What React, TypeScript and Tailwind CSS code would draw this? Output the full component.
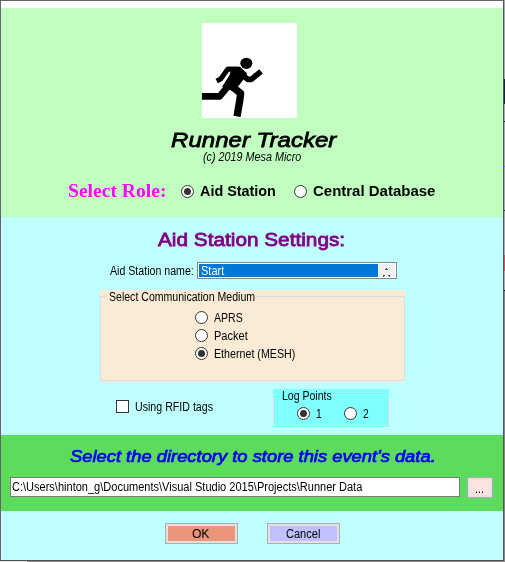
import { useLayoutEffect, useRef, useState } from "react";

type FitProps = { text: string; width: number; className?: string };

// A single line of text stretched or condensed to an exact width.
function Fit({ text, width, className = "" }: FitProps) {
  const ref = useRef<HTMLSpanElement>(null);
  const [scale, setScale] = useState(1);
  useLayoutEffect(() => {
    if (ref.current) setScale(width / ref.current.offsetWidth);
  }, [width]);
  return (
    <span className="block shrink-0" style={{ width }}>
      <span
        ref={ref}
        className={`block w-max origin-left whitespace-pre ${className}`}
        style={{ transform: `scaleX(${scale})` }}
      >
        {text}
      </span>
    </span>
  );
}

function Radio({ checked = false }: { checked?: boolean }) {
  return (
    <span className="flex h-[13px] w-[13px] shrink-0 items-center justify-center rounded-full border border-[#333] bg-white">
      {checked && <span className="h-[7px] w-[7px] rounded-full bg-[#333]" />}
    </span>
  );
}

function Option({ text, width, checked }: { text: string; width: number; checked?: boolean }) {
  return (
    <label className="flex h-[18px] items-center gap-[6px]">
      <Radio checked={checked} />
      <Fit text={text} width={width} className="pt-px text-[12px] leading-[14px]" />
    </label>
  );
}

function Runner() {
  return (
    <svg width="95" height="95" viewBox="0 0 285 285" className="block bg-white">
      <defs>
        <filter id="soft" x="-10%" y="-10%" width="120%" height="120%">
          <feGaussianBlur stdDeviation="2.2" />
        </filter>
      </defs>
      <g transform="translate(-21 66)" fill="none" stroke="#000" strokeLinejoin="round" filter="url(#soft)">
        <ellipse cx="154" cy="55" rx="18" ry="17" fill="#000" stroke="none" />
        <path d="M65 108 L77 102 L98 73 L130 73" strokeWidth="15" />
        <path d="M128 78 L158 103 L169 103 L198 79" strokeWidth="17" />
        <path d="M97 67 L134 67 L154 86 L148 97 L130 120 L114 136 L84 125 L105 92 L110 76 Z" fill="#000" strokeWidth="4" />
        <path d="M10 154 L74 154 L103 119" strokeWidth="20" />
        <path d="M107 121 L137 145 L134 168 L126 214" strokeWidth="22" />
      </g>
    </svg>
  );
}

function PushButton({ text, width, color }: { text: string; width: number; color: string }) {
  return (
    <button className="h-[21px] w-[73px] border border-[#adadad] bg-[#e1e1e1] p-[2px]">
      <span className={`flex h-full w-full items-center justify-center pr-[2px] ${color}`}>
        <Fit text={text} width={width} className="pt-px text-[12px] leading-[14px]" />
      </span>
    </button>
  );
}

export default function App() {
  return (
    <div className="flex h-[562px] w-[505px] flex-col overflow-hidden bg-[#8f8b8d] font-['Liberation_Sans',Arial,sans-serif] text-black">
      <div className="flex h-[561px]">
        <main className="flex h-[561px] w-[504px] flex-col border border-[#66636a] border-r-[#555] border-b-[#505050] bg-white pt-[7px]">
          <section className="flex h-[209px] shrink-0 flex-col items-center bg-[#c0ffc0] pt-[15px]">
            <div className="mr-[5px]">
              <Runner />
            </div>
            <div className="mt-[12px] ml-[3px] h-[20px]">
              <Fit
                text="Runner Tracker"
                width={165}
                className="text-[21px] leading-[20px] italic [-webkit-text-stroke:0.8px_black]"
              />
            </div>
            <div className="h-[14px]">
              <Fit text="(c) 2019 Mesa Micro" width={98} className="text-[12px] leading-[14px] italic" />
            </div>
            <div className="mt-[16px] flex h-[22px] w-full items-center pl-[67px]">
              <Fit
                text="Select Role:"
                width={98}
                className="font-['Liberation_Serif',serif] text-[18px] leading-[22px] font-bold text-[#ff00ff]"
              />
              <label className="ml-[15px] flex items-center gap-[6px]">
                <Radio checked />
                <Fit text="Aid Station" width={76} className="text-[14px] leading-[18px] font-bold" />
              </label>
              <label className="ml-[18px] flex items-center gap-[6px]">
                <Radio />
                <Fit text="Central Database" width={122} className="text-[14px] leading-[18px] font-bold" />
              </label>
            </div>
          </section>

          <section className="h-[218px] shrink-0 bg-[#c0ffff]">
            <h2 className="flex h-[45px] items-center pl-[157px]">
              <Fit
                text="Aid Station Settings:"
                width={187}
                className="text-[19px] leading-[22px] text-[#800080] [-webkit-text-stroke:0.8px_#800080]"
              />
            </h2>
            <div className="flex h-[17px] items-center pl-[109px]">
              <Fit text="Aid Station name:" width={84} className="pt-px text-[12px] leading-[14px]" />
              <div className="ml-[3px] flex h-[17px] w-[200px] border border-[#828790] bg-white p-px">
                <div className="flex w-[179px] items-center bg-[#0078d7] pl-[2px] text-white">
                  <Fit text="Start" width={23} className="pt-px text-[12px] leading-[14px]" />
                </div>
                <div className="ml-px flex-1 bg-[#f0f0f0]">
                  <svg width="16" height="13" viewBox="0 0 16 13" className="block" fill="none" stroke="#505050" shapeRendering="crispEdges">
                    <path d="M7 4.5h1M6 5.5h3M4 11.5h2M9 11.5h2M4 12.5h1M10 12.5h1" />
                  </svg>
                </div>
              </div>
            </div>

            <fieldset className="mt-[11px] ml-[99px] h-[92px] w-[305px] bg-[#faebd7]">
              <div className="flex h-[14px] items-start">
                <span className="mt-[6px] h-[8px] w-[6px] border-t border-l border-[#dcdcdc]" />
                <span className="ml-[3px]">
                  <Fit text="Select Communication Medium" width={146} className="text-[12px] leading-[14px]" />
                </span>
                <span className="mt-[6px] ml-px h-[8px] flex-1 border-t border-r border-[#dcdcdc]" />
              </div>
              <div className="h-[77px] border-x border-b border-[#dcdcdc] pt-[4px] pl-[94px]">
                <Option text="APRS" width={29} />
                <Option text="Packet" width={34} />
                <Option text="Ethernet (MESH)" width={81} checked />
              </div>
            </fieldset>

            <div className="mt-[7px] flex pl-[115px]">
              <label className="mt-[11px] flex h-[13px] items-center gap-[6px]">
                <span className="h-[13px] w-[13px] border border-[#333] bg-white" />
                <Fit text="Using RFID tags" width={78} className="text-[12px] leading-[14px]" />
              </label>
              <fieldset className="ml-[60px] h-[38px] w-[116px] bg-[#80ffff] pb-px">
                <div className="flex h-[14px] items-start">
                  <span className="mt-[6px] h-[8px] w-[6px] border-t border-l border-[#dcdcdc]" />
                  <span className="ml-[3px]">
                    <Fit text="Log Points" width={50} className="text-[12px] leading-[14px]" />
                  </span>
                  <span className="mt-[6px] ml-px h-[8px] flex-1 border-t border-r border-[#dcdcdc]" />
                </div>
                <div className="flex h-[23px] gap-[22px] border-x border-b border-[#dcdcdc] pt-px pl-[23px]">
                  <Option text="1" width={6} checked />
                  <Option text="2" width={6} />
                </div>
              </fieldset>
            </div>
          </section>

          <section className="h-[76px] shrink-0 bg-[#5bdd5b]">
            <h3 className="flex h-[42px] items-center pl-[69px]">
              <Fit
                text="Select the directory to store this event's data."
                width={366}
                className="pt-[2px] text-[16px] leading-[20px] text-[#0000f0] italic [-webkit-text-stroke:0.7px_#0000f0]"
              />
            </h3>
            <div className="flex items-start pl-[9px]">
              <div className="flex h-[20px] w-[450px] items-center border border-[#7a7a7a] bg-white pl-px">
                <Fit
                  text={"C:\\Users\\hinton_g\\Documents\\Visual Studio 2015\\Projects\\Runner Data"}
                  width={350}
                  className="text-[12px] leading-[14px]"
                />
              </div>
              <button className="ml-[7px] h-[21px] w-[26px] border border-[#adadad] bg-[#e1e1e1] p-[2px]">
                <span className="flex h-full items-center justify-center bg-[#ffe4e1] pt-[2px] pr-px">
                  <Fit text="..." width={9} className="text-[12px] leading-[14px]" />
                </span>
              </button>
            </div>
          </section>

          <section className="flex flex-1 gap-[29px] bg-[#c0ffff] pt-[12px] pl-[164px]">
            <PushButton text="OK" width={17} color="bg-[#e9967a]" />
            <PushButton text="Cancel" width={34} color="bg-[#c0c0ff]" />
          </section>
        </main>

        <div className="flex w-px flex-col bg-[#aaa9b0]">
          <span className="mt-[79px] h-[25px] bg-[#14263c]" />
          <span className="mt-[17px] h-px bg-[#222]" />
          <span className="mt-[44px] h-px bg-[#7575dd]" />
          <span className="mt-[43px] h-px bg-[#333]" />
          <span className="mt-[44px] h-[16px] bg-[#cf5656]" />
          <span className="mt-[19px] h-px bg-[#111]" />
          <span className="flex-1 bg-[#858585]" />
        </div>
      </div>
      <div className="flex h-px">
        <span className="w-[27px] bg-[#dedede]" />
      </div>
    </div>
  );
}
